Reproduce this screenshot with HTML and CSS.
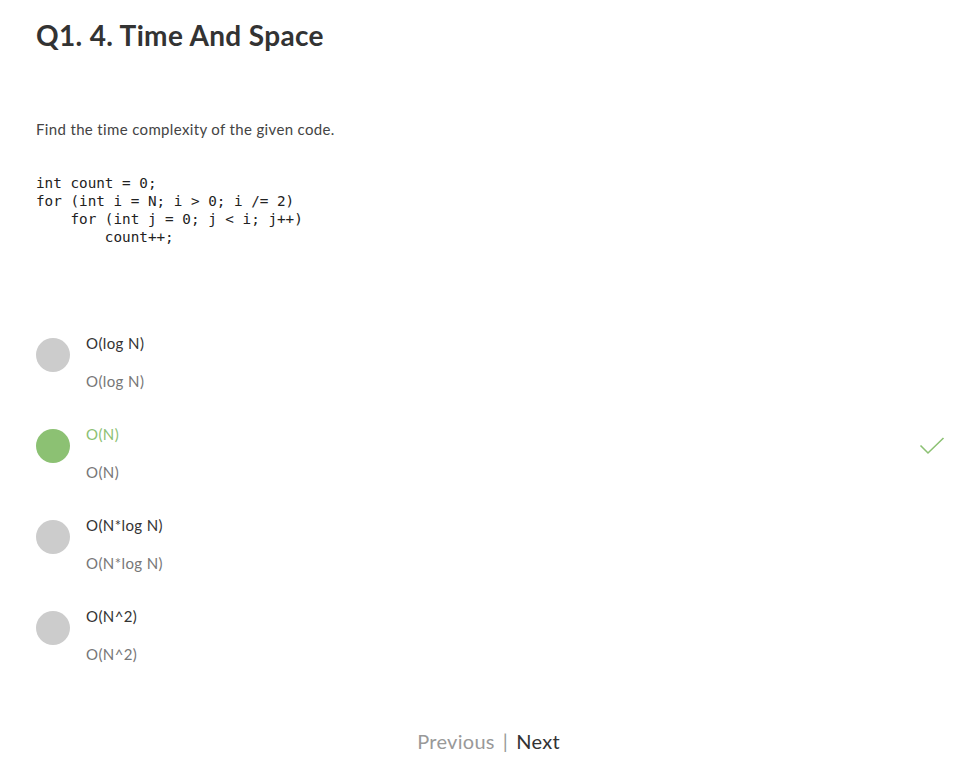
FILE: index.html
```html
<!DOCTYPE html>
<html>
<head>
<meta charset="utf-8">
<link rel="stylesheet" href="styles.css">
</head>
<body>
<div class="page">
  <h1 class="title">Q1. 4. Time And Space</h1>
  <p class="question">Find the time complexity of the given code.</p>
  <pre class="code">int count = 0;
for (int i = N; i &gt; 0; i /= 2)
    for (int j = 0; j &lt; i; j++)
        count++;</pre>
  <div class="options">
    <div class="option">
      <span class="dot"></span>
      <div class="labels">
        <div class="main">O(log N)</div>
        <div class="sub">O(log N)</div>
      </div>
    </div>
    <div class="option correct">
      <span class="dot"></span>
      <div class="labels">
        <div class="main">O(N)</div>
        <div class="sub">O(N)</div>
      </div>
      <svg class="check" width="26" height="18" viewBox="0 0 26 18"><path d="M1.5 8.5 L9 16 L24.5 1" fill="none" stroke="#8cc173" stroke-width="1.6"/></svg>
    </div>
    <div class="option">
      <span class="dot"></span>
      <div class="labels">
        <div class="main">O(N*log N)</div>
        <div class="sub">O(N*log N)</div>
      </div>
    </div>
    <div class="option">
      <span class="dot"></span>
      <div class="labels">
        <div class="main">O(N^2)</div>
        <div class="sub">O(N^2)</div>
      </div>
    </div>
  </div>
  <div class="nav">
    <span class="prev">Previous</span>
    <span class="sep">|</span>
    <span class="next">Next</span>
  </div>
</div>
</body>
</html>
```
FILE: styles.css
```css
* { box-sizing: border-box; }
html, body { margin: 0; padding: 0; background: #fff; }
body { font-family: "Lato", "Noto Sans", sans-serif; color: #333; }
.page { padding: 17px 36px 0 36px; }
.title { margin: 0; font-size: 28px; font-weight: 700; color: #333; line-height: 36px; letter-spacing: 0.35px; }
.question { margin: 66px 0 0 0; font-size: 15px; line-height: 20px; color: #444; letter-spacing: 0.35px; }
.code { margin: 35px 0 0 0; font-family: "DejaVu Sans Mono", monospace; font-size: 14.3px; line-height: 18px; color: #222; }
.options { margin-top: 87px; display: flex; flex-direction: column; gap: 29px; }
.option { display: flex; align-items: flex-start; position: relative; height: 62px; }
.dot { width: 34px; height: 34px; border-radius: 50%; background: #cccccc; margin-top: 5px; flex: none; }
.labels { margin-left: 16px; display: flex; flex-direction: column; gap: 18px; }
.main { font-size: 15px; line-height: 20px; color: #333; letter-spacing: 0.4px; }
.sub { font-size: 15px; line-height: 20px; color: #777; letter-spacing: 0.4px; }
.correct .dot { background: #8cc173; }
.correct .main { color: #8cc173; }
.check { position: absolute; right: -4px; top: 13px; }
.nav { margin-top: 60px; display: flex; justify-content: center; gap: 8px; font-size: 20px; line-height: 26px; letter-spacing: 0.3px; }
.prev { color: #999; }
.sep { color: #999; }
.next { color: #333; }
```
